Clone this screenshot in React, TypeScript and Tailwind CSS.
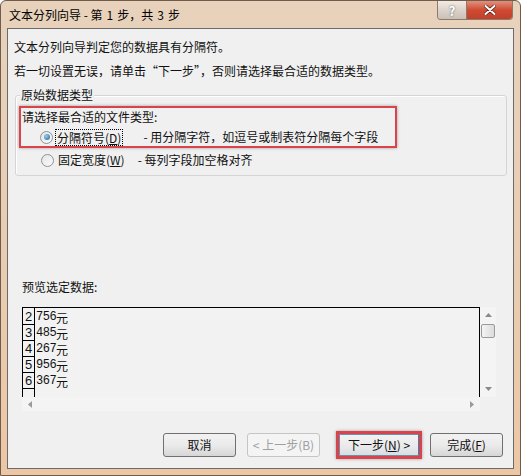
import React from 'react';

const cjk = { fontFamily: '"Noto Sans CJK SC", "Microsoft YaHei", sans-serif' };

function Radio({ checked }: { checked?: boolean }) {
  return (
    <span className="flex h-[13px] w-[13px] shrink-0 items-center justify-center rounded-full border border-[#8f9296] bg-gradient-to-br from-[#e3e4e6] to-[#fbfbfb]">
      {checked && (
        <span className="h-[6px] w-[6px] rounded-full bg-[radial-gradient(circle_at_35%_35%,#9ad0f0,#1d5f98)]" />
      )}
    </span>
  );
}

function Btn({ children, disabled }: { children: React.ReactNode; disabled?: boolean }) {
  return (
    <div
      className={
        'flex h-[24px] w-[73px] items-center justify-center rounded-[3px] border text-[12px] ' +
        (disabled
          ? 'border-[#c5c5c5] bg-[#f4f4f4] text-[#a0a0a0]'
          : 'border-[#707070] bg-gradient-to-b from-[#f2f2f2] via-[#ebebeb] to-[#d6d6d6] text-[#111]')
      }
    >
      {children}
    </div>
  );
}

const rows = [
  ['2', '756'],
  ['3', '485'],
  ['4', '267'],
  ['5', '956'],
  ['6', '367'],
];

export default function App() {
  return (
    <div
      className="flex h-[476px] w-[521px] flex-col overflow-hidden rounded-t-[6px] border border-[#6f5c4c] bg-gradient-to-b from-[#e8d2bc] via-[#e9cdb2] to-[#ecc7a6]"
      style={cjk}
    >
      {/* title bar */}
      <div className="flex h-[27px] items-start">
        <div className="pl-[8px] pt-[6px] text-[12px] leading-[15px] text-black">
          文本分列向导 - 第<span className="mx-[4px]">1</span>步，共<span className="mx-[4px]">3</span>步
        </div>
        <div className="ml-auto mr-[7px] flex h-[19px] overflow-hidden rounded-b-[4px] border border-t-0 border-[#8c7a6b]">
          <div className="flex w-[28px] items-center justify-center bg-gradient-to-b from-[#f2ebe4] via-[#dcd4cc] to-[#c9c0b8] text-[13px] font-bold leading-none text-white [text-shadow:0_0_2px_#555]">
            ?
          </div>
          <div className="flex w-[46px] items-center justify-center border-l border-[#8c7a6b] bg-gradient-to-b from-[#e0907c] via-[#cf4a32] to-[#c2402b]">
            <svg width="12" height="10" viewBox="0 0 12 10">
              <path d="M1.5 1 L10.5 9 M10.5 1 L1.5 9" stroke="#5a1a10" strokeWidth="3.4" strokeLinecap="round" />
              <path d="M1.5 1 L10.5 9 M10.5 1 L1.5 9" stroke="#fff" strokeWidth="2" strokeLinecap="round" />
            </svg>
          </div>
        </div>
      </div>

      {/* client area */}
      <div className="mx-[6px] mb-[6px] flex flex-1 flex-col border border-[#6b6b6b] bg-[#f0f0f0] pt-[6px] text-[12px] text-[#111]">
        <div className="h-[24px] pl-[6px] leading-[24px]">文本分列向导判定您的数据具有分隔符。</div>
        <div className="h-[24px] pl-[6px] leading-[24px]">
          若一切设置无误，请单击“下一步”，否则请选择最合适的数据类型。
        </div>

        {/* group box */}
        <div className="relative ml-[7px] mr-[6px] mt-[12px] rounded-[3px] border border-[#d5d5d5] pb-[6px] pt-[10px] shadow-[inset_1px_1px_0_#fff]">
          <span className="absolute left-[4px] top-[-10px] bg-[#f0f0f0] px-[1px] leading-[18px]">原始数据类型</span>
          <div className="ml-[3px] w-[378px] border-2 border-[#d9434b] shadow-[0_0_3px_rgba(0,0,0,0.35)]">
            <div className="h-[20px] pl-[1px] leading-[18px]">请选择最合适的文件类型:</div>
            <div className="flex h-[18px] items-center">
              <span className="ml-[19px]">
                <Radio checked />
              </span>
              <span className="ml-[2px] border border-dotted border-black px-[1px] leading-[15px]">
                分隔符号(<span className="underline">D</span>)
              </span>
              <span className="ml-[20px]">- 用分隔字符，如逗号或制表符分隔每个字段</span>
            </div>
          </div>
          <div className="mt-[3px] flex h-[18px] items-center">
            <span className="ml-[25px]">
              <Radio />
            </span>
            <span className="ml-[3px] px-[1px]">
              固定宽度(<span className="underline">W</span>)
            </span>
            <span className="ml-[12px]">- 每列字段加空格对齐</span>
          </div>
        </div>

        {/* preview */}
        <div className="ml-[14px] mt-[103px] h-[16px] leading-[16px]">预览选定数据:</div>
        <div className="ml-[14px] mt-[12px] flex h-[104px] w-[474px]">
          <div className="flex w-[458px] flex-col">
            <div className="flex-1 overflow-hidden border-l border-r border-t border-black bg-[#f2f2f2]">
              {rows.map(([n, v], i) => (
                <div key={n} className={'flex ' + (i === 0 ? 'h-[17px]' : 'h-[16px]')}>
                  <div
                    className="flex w-[12px] items-end justify-center border-b border-r border-black text-[13px] leading-[14px]"
                    style={{ fontFamily: '"Liberation Sans", sans-serif' }}
                  >
                    {n}
                  </div>
                  <div className="flex items-end pl-[1px] text-[12px] leading-[15px]">
                    <span style={{ fontFamily: '"Liberation Mono", monospace' }} className="tracking-[-0.5px]">
                      {v}
                    </span>
                    <span>元</span>
                  </div>
                </div>
              ))}
              <div className="h-[20px] w-[12px] border-r border-black" />
            </div>
            <div className="flex h-[14px] items-center justify-between bg-[#f4f4f4] px-[6px]">
              <svg width="4" height="7" viewBox="0 0 4 7"><path d="M4 0 L0 3.5 L4 7Z" fill="#9a9a9a" /></svg>
              <svg width="4" height="7" viewBox="0 0 4 7"><path d="M0 0 L4 3.5 L0 7Z" fill="#9a9a9a" /></svg>
            </div>
          </div>
          <div className="flex h-[90px] w-[16px] flex-col items-center bg-[#f4f4f4] pt-[6px]">
            <svg width="7" height="4" viewBox="0 0 7 4"><path d="M0 4 L3.5 0 L7 4Z" fill="#8a8a8a" /></svg>
            <div className="mt-[7px] h-[14px] w-[14px] rounded-[2px] border border-[#9a9a9a] bg-gradient-to-r from-[#f4f4f4] to-[#dcdcdc]" />
            <svg className="mb-[6px] mt-auto" width="7" height="4" viewBox="0 0 7 4"><path d="M0 0 L3.5 4 L7 0Z" fill="#8a8a8a" /></svg>
          </div>
        </div>

        {/* buttons */}
        <div className="mt-[20px] flex items-center pr-[6px]">
          <div className="ml-[155px]">
            <Btn>取消</Btn>
          </div>
          <div className="ml-[11px]">
            <Btn disabled>&lt; 上一步(B)</Btn>
          </div>
          <div className="ml-[16px] border-[3px] border-[#d9434b] shadow-[0_0_3px_rgba(0,0,0,0.35)]">
            <div className="flex h-[22px] w-[80px] items-center justify-center border border-[#6d8fae] border-r-[#3c7fb1] bg-gradient-to-b from-[#f2f2f2] via-[#ebebeb] to-[#d9dee3] text-[12px]">
              下一步(<span className="underline">N</span>) &gt;
            </div>
          </div>
          <div className="ml-[8px]">
            <Btn>
              完成(<span className="underline">F</span>)
            </Btn>
          </div>
        </div>
      </div>
    </div>
  );
}
